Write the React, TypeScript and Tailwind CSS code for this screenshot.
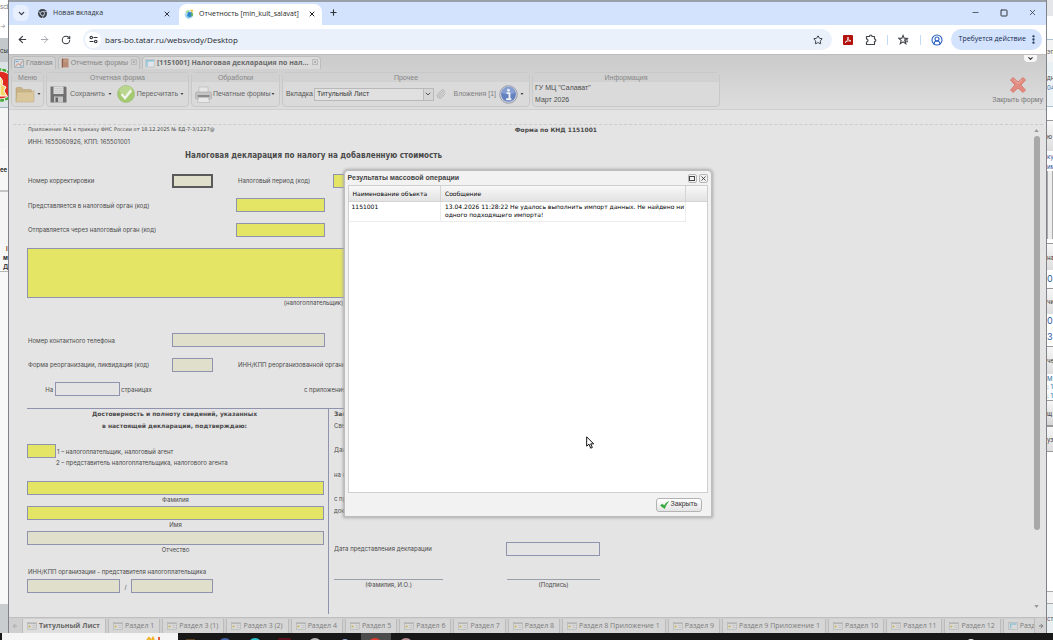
import type { ReactNode } from 'react';
import {
	ArrowLeft,
	ArrowRight,
	ChevronDown,
	CircleUserRound,
	EllipsisVertical,
	Minus,
	Paperclip,
	Plus,
	RotateCw,
	Square,
	Star,
	X,
} from 'lucide-react';

const SHEET_FONT = "font-['Inter','Noto_Sans',sans-serif]";
const BOLD_FONT = "font-['DejaVu_Sans',sans-serif] font-bold";
const TITLE_FONT = "font-['DejaVu_Sans_Condensed','DejaVu_Sans',sans-serif] font-bold";
const TOOLBAR_FONT = "font-['Liberation_Sans',Arial,sans-serif]";
const GRID_FONT = "font-['DejaVu_Sans',sans-serif]";
const CHROME_FONT = "font-['Open_Sans','Noto_Sans',sans-serif]";

// ─── Data ─────────────────────────────────────────────────────────────────────
const SHEETS = [
	'Титульный Лист',
	'Раздел 1',
	'Раздел 3 (1)',
	'Раздел 3 (2)',
	'Раздел 4',
	'Раздел 5',
	'Раздел 6',
	'Раздел 7',
	'Раздел 8',
	'Раздел 8 Приложение 1',
	'Раздел 9',
	'Раздел 9 Приложение 1',
	'Раздел 10',
	'Раздел 11',
	'Раздел 12',
	'Раздел 13',
];

type Strip = { cls: string; text?: string };

const LEFT_STRIPS: Strip[] = [
	{ cls: 'h-[12px] bg-white text-[#777]', text: 'scb' },
	{ cls: 'h-[26px] bg-white text-[#888]', text: '→' },
	{ cls: 'h-[24px] bg-[#c3c8cb] text-[#333]', text: 'сы' },
];

const LEFT_STRIPS_LOWER: Strip[] = [
	{ cls: 'h-[9px] bg-[#f5f5f5] border-t border-[#9fb4bd]' },
	{ cls: 'h-[32px] bg-[#f5f5f5]' },
	{ cls: 'h-[42px] bg-[#f7f7f7] font-bold text-[#333]', text: 'ее' },
	{ cls: 'h-[54px] bg-[#f5f5f5] border-t-2 border-[#c4c4c4]' },
	{ cls: 'h-[9px] bg-[#f7f7f7] font-bold text-[#7a3c1d] pl-[6px]', text: 'І' },
	{ cls: 'h-[9px] bg-[#f7f7f7] font-bold text-[#333] pl-[3px]', text: 'м' },
	{ cls: 'h-[9px] bg-[#f7f7f7] font-bold text-[#333] pl-[3px]', text: 'Д' },
	{ cls: 'h-[333px] bg-[#f8f8f8] border-t border-[#b5b5b5]' },
	{ cls: 'flex-1 bg-[#c9cdcf]' },
];

const RIGHT_STRIPS: Strip[] = [
	{ cls: 'h-[16px] bg-[#e4e6ea]' },
	{ cls: 'h-[23px] bg-white' },
	{ cls: 'h-[23px] bg-[#f4f4f4] border-t border-[#a9c3d2] text-[#555]', text: 'эп' },
	{ cls: 'h-[10px] bg-[#e9f1f5]' },
	{ cls: 'h-[10px] bg-[#eef4f6] text-[#444]', text: 'дн' },
	{ cls: 'h-[10px] bg-[#eef4f6] text-[#3c6ea8]', text: '04' },
	{ cls: 'h-[14px] bg-[#eef4f6]' },
	{ cls: 'h-[14px] bg-white border-t border-[#a9c3d2]' },
	{ cls: 'h-[31px] bg-gradient-to-b from-[#f7f7f7] to-[#dedede] border-t border-[#999] text-[#333]', text: 'ю' },
	{ cls: 'h-[10px] bg-white text-[#2e4f9e]', text: 'ку' },
	{ cls: 'h-[10px] bg-white text-[#2e4f9e]', text: 'им' },
	{ cls: 'h-[68px] bg-[#ededed] border-x border-[#aaa]' },
	{ cls: 'h-[4px] bg-white' },
	{ cls: 'h-[27px] bg-gradient-to-b from-[#f7f7f7] to-[#dedede] border-t border-[#999] text-[#333]', text: 'на' },
	{ cls: 'h-[18px] bg-white text-[9px] text-[#2f6296]', text: '04' },
	{ cls: 'h-[26px] bg-gradient-to-b from-[#f7f7f7] to-[#dedede] border-t border-[#999] text-[#333]', text: 'чи' },
	{ cls: 'h-[14px] bg-white text-[9px] text-[#2f5ca6]', text: '0' },
	{ cls: 'h-[18px] bg-white text-[9px] text-[#2f5ca6]', text: '3' },
	{ cls: 'h-[28px] bg-gradient-to-b from-[#f7f7f7] to-[#dedede] border-t border-[#999] text-[#333]', text: 'че' },
	{ cls: 'h-[8px] bg-white text-[#2c6d9b]', text: 'М' },
	{ cls: 'h-[9px] bg-white text-[#2c6d9b]', text: ': 1' },
	{ cls: 'h-[9px] bg-white text-[#2c6d9b]', text: ': 1' },
	{ cls: 'h-[26px] bg-gradient-to-b from-[#f7f7f7] to-[#d6d6d6] border-y border-[#999] text-[#333]', text: 'щ' },
	{ cls: 'h-[26px] bg-gradient-to-b from-[#f7f7f7] to-[#dedede] border-y border-[#999] text-[#333]', text: 'уз' },
	{ cls: 'h-[139px] bg-white' },
	{ cls: 'h-[13px] bg-[#f4f4f4] border-y border-[#aaa]' },
	{ cls: 'flex-1 bg-[#e9eef0] text-[#555]', text: 'ст' },
];

// ─── Icons ────────────────────────────────────────────────────────────────────
function ChromeLogo() {
	return (
		<svg viewBox="0 0 20 20" className="size-[9px] shrink-0">
			<circle cx="10" cy="10" r="10" fill="#3c4043" />
			<path d="M10 5.5h9M6.2 12.4L1.6 4.6M13.8 12.4L9.4 20" stroke="#d3e3fd" strokeWidth="1.4" />
			<circle cx="10" cy="10" r="4.6" fill="#3c4043" stroke="#d3e3fd" strokeWidth="1.8" />
		</svg>
	);
}

function BarsLogo() {
	return (
		<svg viewBox="0 0 20 20" className="size-[10px] shrink-0">
			<circle cx="10" cy="11" r="8.5" fill="#b4dcf2" />
			<path d="M3 6a9 9 0 0 1 7-4l-1 6z" fill="#a8dc8a" />
			<path d="M12 1l7 1-3 6z" fill="#f4c63d" />
			<path d="M8 6l8 1 1 7-7 3-4-4z" fill="#2f86c9" />
			<path d="M14 9l4-1v5l-3 2z" fill="#6dbb4a" />
			<path d="M2 12l5 6 3 1-2-5z" fill="#7fc6e6" />
		</svg>
	);
}

function TuneIcon() {
	return (
		<svg viewBox="0 0 16 16" className="size-[9px]" fill="none" stroke="#30343a" strokeWidth="2">
			<circle cx="4" cy="4.5" r="2.2" />
			<path d="M8 4.5h7M1 11.5h7" />
			<circle cx="12" cy="11.5" r="2.2" />
		</svg>
	);
}

function AdobeIcon() {
	return (
		<svg viewBox="0 0 20 20" className="size-[10px]">
			<rect width="20" height="20" rx="2" fill="#b3120d" />
			<path
				d="M4 15c3-1 6-6 6-11 0 5 3 8 6 8-4-1-9 0-12 3z"
				fill="none"
				stroke="#fff"
				strokeWidth="1.6"
				strokeLinejoin="round"
			/>
		</svg>
	);
}

function ExtensionIcon() {
	return (
		<svg viewBox="0 0 24 24" className="size-[12px]" fill="none" stroke="#42464b" strokeWidth="2.4">
			<path d="M3 5h6c0-4 5-4 5 0h5v5c3.500 0 3.500 5 0 5v6H3v-5c4 0 4-6 0-6z" strokeLinejoin="round" />
		</svg>
	);
}

function StarListIcon() {
	return (
		<svg viewBox="0 0 24 24" className="size-[11px]" fill="none" stroke="#42464b" strokeWidth="2.4">
			<path d="M11 3l2.500 6 7 .5-5.500 4.500 2 7-6-4-6 4 2-7L1.500 9.500l7-.5z" />
			<path d="M13 13h9M15 17h7" />
		</svg>
	);
}

function HomeIcon() {
	return (
		<svg viewBox="0 0 20 18" className="h-[9px] w-[10px]">
			<rect x="1" y="1" width="18" height="16" rx="1" fill="#d3d9de" stroke="#94a3ae" strokeWidth="1.5" />
			<path d="M3 15l5-6 4 3 5-8" fill="none" stroke="#d38f76" strokeWidth="2" />
			<path d="M3 5h6M12 14h5" stroke="#7fa6c4" strokeWidth="2" />
		</svg>
	);
}

function BookIcon() {
	return (
		<svg viewBox="0 0 16 20" className="h-[10px] w-[8px]">
			<rect x="1" y="1" width="14" height="18" rx="1" fill="#b98b74" />
			<path d="M3 1v18" stroke="#8d6350" strokeWidth="2" />
			<path d="M6 6h6" stroke="#d6b5a3" strokeWidth="1.5" />
		</svg>
	);
}

function WindowIcon() {
	return (
		<svg viewBox="0 0 20 18" className="h-[9px] w-[10px]">
			<rect x="1" y="1" width="18" height="15" fill="#dfe5e8" stroke="#a9b3b8" />
			<path d="M2 3.500h16M4 2v13" stroke="#8ec4d6" strokeWidth="3" />
		</svg>
	);
}

function SheetIcon({ blue }: { blue?: boolean }) {
	return (
		<svg viewBox="0 0 20 16" className="h-[8px] w-[10px] shrink-0">
			<rect x="1" y="1" width="18" height="14" fill="#d9d9d9" stroke="#aaa" />
			{blue ? (
				<path d="M5 13V4h12" fill="none" stroke="#8ec4d6" strokeWidth="3" />
			) : (
				<>
					<path d="M1 3h18" stroke="#b5b5b5" strokeWidth="2" />
					<path d="M11 7h6M11 11h6" stroke="#bcbcbc" strokeWidth="1.500" />
					<circle cx="5" cy="9" r="2.200" fill="#cdb254" />
				</>
			)}
		</svg>
	);
}

function FolderIcon() {
	return (
		<svg viewBox="0 0 40 34" className="h-[17px] w-[20px]">
			<path d="M2 31V5q0-2 2-2h9l3 4h15q2 0 2 2v22z" fill="#c9b487" stroke="#b09a6c" />
			<path d="M2 32L4 12h30l4-3v21q0 2-2 2z" fill="#dac79c" stroke="#b9a578" />
		</svg>
	);
}

function SaveIcon() {
	return (
		<svg viewBox="0 0 34 34" className="size-[17px]">
			<path d="M1 1h30l2 2v30H1z" fill="#717171" />
			<rect x="7" y="1" width="20" height="15" fill="#dcdcdc" />
			<path d="M9 5h16M9 9h16M9 13h16" stroke="#bdbdbd" />
			<rect x="8" y="21" width="18" height="12" fill="#c6c6c6" />
			<rect x="11" y="23" width="5" height="9" fill="#666" />
		</svg>
	);
}

function CheckIcon() {
	return (
		<svg viewBox="0 0 36 36" className="size-[18px]">
			<circle cx="18" cy="18" r="17" fill="#a4ca70" stroke="#95b56c" />
			<ellipse cx="18" cy="11" rx="13" ry="9" fill="#bad790" />
			<path d="M9 18l7 8 12-15" fill="none" stroke="#f1f4ec" strokeWidth="5" />
		</svg>
	);
}

function PrinterIcon() {
	return (
		<svg viewBox="0 0 34 34" className="size-[17px]">
			<path d="M8 2h18v11H8z" fill="#e6e6e6" stroke="#aaa" />
			<rect x="1" y="12" width="32" height="14" rx="3" fill="#c5c5c5" stroke="#999" />
			<path d="M5 20h24" stroke="#777" strokeWidth="3" />
			<path d="M7 23h20l2 10H5z" fill="#e8e8e8" stroke="#aaa" />
		</svg>
	);
}

function InfoIcon() {
	return (
		<svg viewBox="0 0 40 40" className="size-[19px]">
			<circle cx="20" cy="20" r="18.500" fill="#ccd0da" stroke="#9a9daa" strokeWidth="2" />
			<circle cx="20" cy="20" r="15.500" fill="#6481c0" />
			<path d="M6 17a14 14 0 0 1 28 0q-14 5-28 0z" fill="#859fd3" />
			<circle cx="20" cy="11" r="3" fill="#eef0f5" />
			<path d="M16 17h6v12M15 30h11" stroke="#eef0f5" strokeWidth="4" fill="none" />
		</svg>
	);
}

function RedCross() {
	return (
		<svg viewBox="0 0 32 32" className="size-[16px]">
			<path
				d="M6 1l10 9L26 1l5 5-9 10 9 10-5 5-10-9-10 9-5-5 9-10L1 6z"
				fill="#e28b80"
				stroke="#d66f65"
				strokeWidth="1.500"
			/>
			<path d="M7 5l9 8 9-8" stroke="#eaada3" strokeWidth="2" fill="none" />
		</svg>
	);
}

function Caret() {
	return (
		<svg viewBox="0 0 6 4" className="h-[2px] w-[4px] shrink-0">
			<path d="M0 0h6L3 4z" fill="#444" />
		</svg>
	);
}

// ─── Browser chrome ───────────────────────────────────────────────────────────
function TabStrip() {
	return (
		<div className="flex h-[25px] shrink-0 items-end border-t-2 border-[#9aa0a9] bg-[#d3e3fd] pl-1 text-[#30343a]">
			<button className="mb-1 flex size-4 items-center justify-center rounded-md bg-[#e9f0fd]" aria-label="Поиск вкладок">
				<ChevronDown size={9} strokeWidth={3} />
			</button>
			<div className="flex h-[23px] w-[150px] items-center gap-[6px] pl-[9px] pr-2">
				<ChromeLogo />
				<span className="flex-1">Новая вкладка</span>
				<button aria-label="Закрыть вкладку">
					<X size={8} strokeWidth={3} />
				</button>
			</div>
			<div className="flex h-[21px] w-[143px] items-center gap-[5px] rounded-t-lg bg-white pl-[5px] pr-1.5 pb-px text-[#1f1f1f]">
				<BarsLogo />
				<span className="flex-1 whitespace-nowrap">Отчетность [min_kult_salavat]</span>
				<button aria-label="Закрыть вкладку">
					<X size={8} strokeWidth={3} />
				</button>
			</div>
			<button className="mb-[8px] ml-[7px]" aria-label="Новая вкладка">
				<Plus size={9} strokeWidth={3} />
			</button>
			<div className="mb-[8px] ml-auto mr-[9px] flex items-center gap-5">
				<button aria-label="Свернуть">
					<Minus size={9} strokeWidth={2} />
				</button>
				<button aria-label="Развернуть">
					<Square size={8} strokeWidth={3} />
				</button>
				<button aria-label="Закрыть">
					<X size={9} strokeWidth={2} />
				</button>
			</div>
		</div>
	);
}

function AddressBar() {
	return (
		<div className="flex h-[29px] shrink-0 items-center bg-white pl-2 pr-1 text-[#3a3e43]">
			<button aria-label="Назад">
				<ArrowLeft size={11} strokeWidth={2.500} />
			</button>
			<button className="ml-[11px] text-[#a0a3a8]" aria-label="Вперед">
				<ArrowRight size={11} strokeWidth={2} />
			</button>
			<button className="ml-[11px]" aria-label="Обновить">
				<RotateCw size={10} strokeWidth={2.500} />
			</button>
			<div className="ml-3 flex h-[21px] flex-1 items-center rounded-full bg-[#eaf1fb] pl-[2px] pr-[9px]">
				<span className="flex size-4 items-center justify-center rounded-full bg-white">
					<TuneIcon />
				</span>
				<input
					aria-label="Адрес"
					className="ml-1 min-w-0 flex-1 text-[8px] text-[#24272b] outline-none"
					defaultValue="bars-bo.tatar.ru/websvody/Desktop"
				/>
				<button aria-label="Добавить в закладки">
					<Star size={10} strokeWidth={2.400} />
				</button>
			</div>
			<div className="ml-[11px] flex items-center gap-3">
				<AdobeIcon />
				<ExtensionIcon />
			</div>
			<span className="ml-[10px] h-[10px] w-px bg-[#c5daf8]" />
			<span className="ml-[10px]">
				<StarListIcon />
			</span>
			<span className="ml-[11px] h-[10px] w-px bg-[#c5daf8]" />
			<CircleUserRound size={12} strokeWidth={2.200} className="ml-[10px] text-[#2d62c4]" />
			<button className="ml-[8px] flex h-[21px] items-center gap-[2px] rounded-full bg-[#d3e3fd] pl-2 pr-[3px] text-[#132a52]">
				Требуется действие
				<EllipsisVertical size={11} strokeWidth={3} />
			</button>
		</div>
	);
}

// ─── Application header ───────────────────────────────────────────────────────
function AppTab({ icon, active, closable, children }: { icon: ReactNode; active?: boolean; closable?: boolean; children: ReactNode }) {
	return (
		<div
			className={`flex h-[13px] items-center rounded-t-sm border border-b-0 border-[#bcbcbc] px-[2px] ${
				active ? `bg-[#dadada] font-bold text-[#6b6b6b] ${CHROME_FONT}` : 'bg-[#d2d2d2] text-[#858585]'
			}`}
		>
			{icon}
			<span className="ml-[2px] whitespace-nowrap">{children}</span>
			{closable && (
				<button className="mb-[3px] ml-[3px] border border-[#bbb] text-[#888]" aria-label="Закрыть">
					<X size={4} strokeWidth={3} />
				</button>
			)}
		</div>
	);
}

function Group({ title, width, children }: { title: string; width: string; children: ReactNode }) {
	return (
		<section className={`flex h-[35px] flex-col rounded-sm border border-[#c8c8c8] bg-[#dadada] ${width}`}>
			<h2 className="flex h-[9px] items-center justify-center bg-[#d1d1d1] leading-[9px] text-[#858585]">{title}</h2>
			<div className="flex flex-1 items-center px-[3px] text-[#666]">{children}</div>
		</section>
	);
}

function AppHeader() {
	return (
		<header className={`shrink-0 border-b border-[#cfcfcf] bg-gradient-to-b from-[#cacaca] via-[#d4d4d4] to-[#dddddd] text-[7px] ${TOOLBAR_FONT}`}>
			<div className="flex h-[15px] items-end gap-[2px] border-t border-[#bdbdbd] pl-[2px]">
				<AppTab icon={<HomeIcon />}>Главная</AppTab>
				<AppTab icon={<BookIcon />} closable>
					Отчетные формы
				</AppTab>
				<AppTab icon={<WindowIcon />} active closable>
					[1151001] Налоговая декларация по нал...
				</AppTab>
				<button className="mb-[7px] ml-auto mr-[9px] flex h-[7px] w-[13px] items-center justify-center rounded-b-sm bg-[#f6f6f6] text-[#333]" aria-label="Показать панель">
					<ChevronDown size={7} strokeWidth={4} />
				</button>
			</div>
			<div className="flex gap-[2px] pb-[2px] pl-[2px] pt-[3px]">
				<Group title="Меню" width="w-[33px]">
					<button className="flex items-center gap-[2px]" aria-label="Меню">
						<FolderIcon />
						<Caret />
					</button>
				</Group>
				<Group title="Отчетная форма" width="w-[143px]">
					<button className="flex items-center gap-[3px] whitespace-nowrap">
						<SaveIcon />
						Сохранить
						<Caret />
					</button>
					<button className="ml-[5px] flex items-center gap-[2px] whitespace-nowrap">
						<CheckIcon />
						Пересчитать
						<Caret />
					</button>
				</Group>
				<Group title="Обработки" width="w-[89px]">
					<button className="flex items-center gap-px whitespace-nowrap">
						<PrinterIcon />
						Печатные формы
						<Caret />
					</button>
				</Group>
				<Group title="Прочее" width="w-[248px]">
					<label htmlFor="sheet" className="text-[#555]">
						Вкладка
					</label>
					<div className="relative ml-px h-[13px] w-[120px] border border-[#b9b9b9] bg-[#e0e0e0]">
						<select id="sheet" className="block h-full w-full appearance-none px-[2px] text-[#3c3c3c] outline-none">
							<option>Титульный Лист</option>
						</select>
						<span className="pointer-events-none absolute inset-y-0 right-0 flex w-[10px] items-center justify-center border-l border-[#bbb] bg-[#d6d6d6] text-[#555]">
							<ChevronDown size={8} strokeWidth={3} />
						</span>
					</div>
					<Paperclip size={10} strokeWidth={2} className="ml-[2px] text-[#a8a8a8]" />
					<span className="ml-auto text-[#808080]">Вложения [1]</span>
					<button className="ml-[3px] mr-[2px] flex items-center gap-[2px]" aria-label="Информация">
						<InfoIcon />
						<Caret />
					</button>
				</Group>
				<Group title="Информация" width="w-[188px]">
					<div className="-ml-px leading-[12px] text-[#4c4c4c]">
						<p>ГУ МЦ "Салават"</p>
						<p>Март 2026</p>
					</div>
				</Group>
				<button className="ml-auto mr-[3px] flex flex-col items-center gap-[2px] self-end pb-[2px] text-[#777]">
					<RedCross />
					<span className="leading-[10px]">Закрыть форму</span>
				</button>
			</div>
		</header>
	);
}

// ─── Declaration sheet ────────────────────────────────────────────────────────
type FieldKind = 'required' | 'optional' | 'plain' | 'focused';

const FIELD_STYLE: Record<FieldKind, string> = {
	required: 'border border-[#8f93ae] bg-[#e5e565]',
	optional: 'border border-[#8f93ae] bg-[#e0dfcc]',
	plain: 'border border-[#8f93ae] bg-[#e4e4e4]',
	focused: 'border-2 border-[#5a5a5a] bg-[#e0dfcc]',
};

function Field({ label, kind, className }: { label: string; kind: FieldKind; className: string }) {
	return <input aria-label={label} className={`block h-[14px] shrink-0 px-1 outline-none ${FIELD_STYLE[kind]} ${className}`} />;
}

function Row({ children }: { children: ReactNode }) {
	return <div className="flex h-[25px] items-center whitespace-nowrap">{children}</div>;
}

function ShortRow({ children }: { children: ReactNode }) {
	return <div className="flex h-[24px] items-center whitespace-nowrap">{children}</div>;
}

function Person({ label, kind }: { label: string; kind: FieldKind }) {
	return (
		<div className="mr-1">
			<Field label={label} kind={kind} className="w-full" />
			<p className="h-[11px] text-center leading-[9px]">{label}</p>
		</div>
	);
}

function Declaration() {
	return (
		<form className="w-[573px] text-[#4a4a4a]">
			<div className="flex h-[9px] items-center justify-between">
				<span className="pl-px font-['DejaVu_Sans',sans-serif] text-[5px]">
					Приложение №1 к приказу ФНС России от 18.12.2025 № ЕД-7-3/1227@
				</span>
				<span className={`pr-[3px] ${BOLD_FONT}`}>Форма по КНД 1151001</span>
			</div>
			<p className="flex h-[15px] items-center pl-px">ИНН: 1655060926, КПП: 165501001</p>
			<h1 className={`mb-[6px] flex h-[13px] items-center justify-center text-[8px] ${TITLE_FONT}`}>
				Налоговая декларация по налогу на добавленную стоимость
			</h1>
			<Row>
				<span className="w-[145px] pl-px">Номер корректировки</span>
				<Field label="Номер корректировки" kind="focused" className="w-[41px]" />
				<span className="ml-[25px] w-[95px]">Налоговый период (код)</span>
				<Field label="Налоговый период (код)" kind="required" className="w-[41px]" />
			</Row>
			<ShortRow>
				<span className="w-[209px] pl-px">Представляется в налоговый орган (код)</span>
				<Field label="Представляется в налоговый орган (код)" kind="required" className="w-[89px]" />
			</ShortRow>
			<Row>
				<span className="w-[209px] pl-px">Отправляется через налоговый орган (код)</span>
				<Field label="Отправляется через налоговый орган (код)" kind="required" className="w-[89px]" />
			</Row>
			<textarea
				aria-label="Налогоплательщик"
				className="mt-[6px] block h-[50px] w-full resize-none border border-[#8f93ae] bg-[#e5e565] outline-none"
			/>
			<p className="mb-[21px] h-[9px] text-center leading-[9px]">(налогоплательщик)</p>
			<ShortRow>
				<span className="w-[145px] pl-px">Номер контактного телефона</span>
				<Field label="Номер контактного телефона" kind="optional" className="w-[153px]" />
			</ShortRow>
			<Row>
				<span className="w-[145px] pl-px">Форма реорганизации, ликвидация (код)</span>
				<Field label="Форма реорганизации, ликвидация (код)" kind="optional" className="w-[41px]" />
				<span className="ml-[25px]">ИНН/КПП реорганизованной организации</span>
			</Row>
			<ShortRow>
				<span className="w-[28px] pr-[2px] text-right">На</span>
				<Field label="Количество страниц" kind="plain" className="w-[65px]" />
				<span className="ml-px w-[183px]">страницах</span>
				<span>с приложением</span>
			</ShortRow>
			<div className="mt-[7px] flex border-t border-[#8f93ae]">
				<div className="h-[205px] w-[302px] shrink-0 border-r border-[#8f93ae]">
					<div className={`pr-[6px] text-center ${BOLD_FONT}`}>
						<p className="h-[10px] leading-[10px]">Достоверность и полноту сведений, указанных</p>
						<p className="h-[14px] leading-[14px]">в настоящей декларации, подтверждаю:</p>
					</div>
					<div className="mt-[11px] flex items-center gap-px">
						<Field label="Код налогоплательщика" kind="required" className="w-[29px]" />
						<span>1 – налогоплательщик, налоговый агент</span>
					</div>
					<p className="mb-[13px] h-[10px] pl-[29px] leading-[10px]">2 – представитель налогоплательщика, налогового агента</p>
					<Person label="Фамилия" kind="required" />
					<Person label="Имя" kind="required" />
					<Person label="Отчество" kind="optional" />
					<p className="mt-[10px] h-[13px] pl-px leading-[11px]">ИНН/КПП организации - представителя налогоплательщика</p>
					<div className="flex items-center">
						<Field label="ИНН" kind="optional" className="w-[93px]" />
						<span className="w-[11px] text-center">/</span>
						<Field label="КПП" kind="optional" className="w-[82px]" />
					</div>
				</div>
				<div className="flex-1 whitespace-nowrap pl-[5px]">
					<p className={`h-[10px] leading-[10px] ${BOLD_FONT}`}>Заполняется работником</p>
					<p className="h-[14px] leading-[14px]">Сведения о представлении</p>
					<div className="pt-[4px]">
						<Row>Данная декларация</Row>
					</div>
					<ShortRow>на страницах</ShortRow>
					<p className="mt-[7px] h-[12px] leading-[12px]">с приложением</p>
					<p className="h-[12px] leading-[12px]">документов</p>
					<div className="mt-[19px]">
						<Row>
							<span className="w-[172px]">Дата представления декларации</span>
							<Field label="Дата представления декларации" kind="plain" className="w-[94px]" />
						</Row>
					</div>
					<div className="mt-[18px] flex justify-between text-center leading-[10px]">
						<p className="w-[109px] border-t border-[#9a9fae]">(Фамилия, И.О.)</p>
						<p className="w-[93px] border-t border-[#9a9fae]">(Подпись)</p>
					</div>
				</div>
			</div>
		</form>
	);
}

function ScrollBar() {
	return (
		<div className="flex w-[7px] shrink-0 flex-col items-center pb-[9px] pt-[4px]" aria-hidden="true">
			<svg viewBox="0 0 6 4" className="h-[3px] w-[5px]">
				<path d="M0 4h6L3 0z" fill="#999" />
			</svg>
			<span className="mt-[4px] w-[6px] flex-[394] rounded-full bg-[#a8a8a8]" />
			<span className="flex-[75]" />
			<svg viewBox="0 0 6 4" className="h-[3px] w-[5px]">
				<path d="M0 0h6L3 4z" fill="#999" />
			</svg>
		</div>
	);
}

function SheetTabs() {
	return (
		<nav className={`flex h-[16px] shrink-0 items-stretch border-t border-[#bfbfbf] bg-[#cfcfcf] text-[7px] text-[#7c7c7c] ${CHROME_FONT}`}>
			<button className="flex w-[11px] shrink-0 items-center justify-center text-[#aaa]" aria-label="Назад">
				<ArrowLeft size={6} strokeWidth={4} />
			</button>
			<div className="flex min-w-0 flex-1 gap-[2px] overflow-hidden pl-[2px] pt-px">
				{SHEETS.map((name, i) => (
					<button
						key={name}
						className={`flex shrink-0 items-center gap-[2px] whitespace-nowrap border-x border-[#bcbcbc] pl-[4px] pr-[5px] ${
							i === 0 ? 'bg-[#dedede] font-bold text-[#6a6a6a]' : 'bg-[#d6d6d6]'
						}`}
					>
						<SheetIcon blue={i === SHEETS.length - 1} />
						{name}
					</button>
				))}
			</div>
			<button className="flex w-[12px] shrink-0 items-center justify-center border-l border-[#bbb] bg-[#d3d3d3]" aria-label="Вперед">
				<ArrowRight size={6} strokeWidth={4} />
			</button>
		</nav>
	);
}

// ─── Dialog ───────────────────────────────────────────────────────────────────
function ResultDialog() {
	return (
		<div
			role="dialog"
			aria-labelledby="result-title"
			className={`flex h-[347px] w-[368px] flex-col rounded-t-[4px] border border-[#bdbdbd] bg-[#f2f2f2] px-[3px] text-[7px] text-black shadow-[0_0_3px_1px_#aaaaaa] ${TOOLBAR_FONT}`}
		>
			<div className="flex h-[14px] shrink-0 items-center gap-[2px]">
				<h2 id="result-title" className="flex-1 font-bold text-[#444]">
					Результаты массовой операции
				</h2>
				<button className="flex size-[9px] items-center justify-center rounded-[2px] border border-[#b5b5b5] text-[#333]" aria-label="Развернуть">
					<span className="h-[5px] w-[6px] border border-[#444]" />
				</button>
				<button className="flex size-[9px] items-center justify-center rounded-[2px] border border-[#b5b5b5] text-[#333]" aria-label="Закрыть окно">
					<X size={7} strokeWidth={3} />
				</button>
			</div>
			<div className="flex-1 border border-[#cfcfcf] bg-white">
				<table className={`w-full table-fixed border-collapse text-left text-[6px] ${GRID_FONT}`}>
					<thead>
						<tr className="h-[15px] bg-gradient-to-b from-[#f8f8f8] to-[#e3e3e3]">
							<th className="w-[92px] border-b border-r border-[#d4d4d4] pl-[4px] font-normal">Наименование объекта</th>
							<th className="border-b border-r border-[#d4d4d4] pl-[4px] font-normal">Сообщение</th>
							<th className="w-[21px] border-b border-[#d4d4d4]" aria-label="Прокрутка" />
						</tr>
					</thead>
					<tbody>
						<tr className="h-[20px] align-top leading-[8px]">
							<td className="border-b border-r border-[#ececec] pl-[3px] pt-px">1151001</td>
							<td className="whitespace-nowrap border-b border-r border-[#ececec] pl-[4px] pt-px">
								13.04.2026 11:28:22 Не удалось выполнить импорт данных. Не найдено ни
								<br />
								одного подходящего импорта!
							</td>
							<td />
						</tr>
					</tbody>
				</table>
			</div>
			<div className="flex h-[23px] shrink-0 items-center justify-end pr-[6px]">
				<button className="flex h-[14px] w-[46px] items-center justify-center gap-[2px] rounded-[3px] border border-[#b3b3b3] bg-gradient-to-b from-white to-[#e4e4e4] text-[#333]">
					<svg viewBox="0 0 18 16" className="h-[8px] w-[9px]">
						<path d="M1 9l4-3 3 4q4-7 9-9-5 6-8 14z" fill="#2fae35" stroke="#1f9427" />
					</svg>
					Закрыть
				</button>
			</div>
		</div>
	);
}

// ─── Desktop around the window ────────────────────────────────────────────────
function Strips({ items }: { items: Strip[] }) {
	return items.map((s, i) => (
		<div key={i} className={`flex items-center overflow-hidden whitespace-nowrap ${s.cls}`}>
			{s.text}
		</div>
	));
}

function Emblem() {
	return (
		<svg viewBox="0 0 8 45" className="h-[45px] w-[8px] shrink-0 bg-[#dce3e6]">
			<circle cx="0" cy="23" r="17" fill="#fff" />
			<circle cx="0" cy="23" r="15.500" fill="none" stroke="#3fa637" strokeWidth="2.500" strokeDasharray="4 1" />
			<circle cx="0" cy="23" r="13.500" fill="#e02b20" />
			<path d="M0 15q4 3 2 8l4 2-2 4 3 5H0z" fill="#f1d66a" stroke="#fff" strokeWidth="1" />
		</svg>
	);
}

function Taskbar() {
	return (
		<footer className="flex h-[7px] shrink-0 overflow-hidden bg-[#181818] pl-[2px]">
			<div className="h-full w-[176px] bg-[#f5f5f5]">
				<svg viewBox="0 0 176 7" className="h-[7px] w-[176px]">
					<path d="M145 7l2-2 2 2M150 7l1-2 1 2" stroke="#f0b429" strokeWidth="2" fill="none" />
					<path d="M157 4v3" stroke="#e0603c" strokeWidth="2" />
				</svg>
			</div>
			<svg viewBox="0 0 240 7" className="h-[7px] w-[240px]">
				<rect x="183" width="30" height="7" fill="#4c4c4c" />
				<path d="M8 7V6h9v1z" fill="#5c4420" />
				<circle cx="47" cy="12" r="7" fill="#4565a8" />
				<circle cx="77" cy="12" r="7" fill="#2cc4cf" />
				<path d="M100 5h13v2h-13z" fill="#5a0f1c" />
				<circle cx="137" cy="12" r="7" fill="#b9b9b9" />
				<circle cx="167" cy="11" r="5" fill="#8fa9d6" />
				<circle cx="197" cy="12" r="7" fill="#e23b30" />
				<circle cx="228" cy="12" r="7" fill="#b88f92" />
			</svg>
			<svg viewBox="0 0 12 7" className="ml-auto mr-[76px] h-[7px] w-[12px]">
				<circle cx="6" cy="10" r="4" fill="#eee" />
			</svg>
		</footer>
	);
}

export default function App() {
	return (
		<div className={`relative flex h-screen flex-col overflow-hidden text-[6px] ${SHEET_FONT}`}>
			<div className="flex min-h-0 flex-1">
				<aside className="flex w-[8px] shrink-0 flex-col overflow-hidden">
					<Strips items={LEFT_STRIPS} />
					<Emblem />
					<Strips items={LEFT_STRIPS_LOWER} />
				</aside>

				<div className="flex min-w-0 flex-1 flex-col border-x border-[#7f8388]">
					<div className={`text-[7px] ${CHROME_FONT}`}>
						<TabStrip />
						<AddressBar />
					</div>
					<div className="relative flex min-h-0 flex-1 flex-col bg-[#e4e4e4]">
						<AppHeader />
						<main className="ml-[4px] mr-[3px] mt-[14px] flex min-h-0 flex-1 border-t border-dashed border-[#cccccc]">
							<div className="min-w-0 flex-1 overflow-hidden pl-[14px]">
								<Declaration />
							</div>
							<ScrollBar />
							<span className="w-[3px] shrink-0" />
						</main>
						<SheetTabs />
						<div className="absolute inset-0 flex items-center justify-center">
							<ResultDialog />
						</div>
					</div>
				</div>

				<aside className="flex w-[6px] shrink-0 flex-col overflow-hidden">
					<Strips items={RIGHT_STRIPS} />
				</aside>
			</div>
			<Taskbar />
			{/* mouse pointer */}
			<svg viewBox="0 0 12 19" className="pointer-events-none absolute left-[586px] top-[436px] h-[13px] w-[8px]">
				<path d="M1 1v14l3.500-3 2.500 6 2.500-1L7 11.500h4.500z" fill="#fff" stroke="#000" strokeWidth="1.400" />
			</svg>
		</div>
	);
}
